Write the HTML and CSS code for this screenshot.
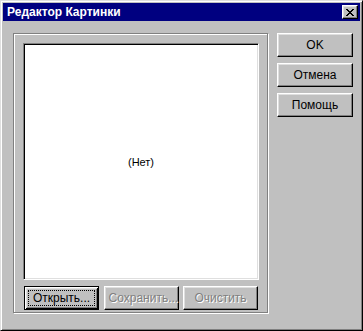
FILE: index.html
```html
<!DOCTYPE html>
<html lang="ru">
<head>
    <meta charset="UTF-8">
    <title>Редактор Картинки</title>
    <link rel="stylesheet" href="styles.css">
</head>
<body>
    <div class="window">
        <div class="titlebar">
            <span class="title">Редактор Картинки</span>
            <button class="close-button" title="Закрыть">
                <svg width="8" height="7" viewBox="0 0 8 7" shape-rendering="crispEdges">
                    <path fill="#000" d="M0 0h2v1h-2zM6 0h2v1h-2zM1 1h2v1h-2zM5 1h2v1h-2zM2 2h4v1h-4zM3 3h2v1h-2zM2 4h4v1h-4zM1 5h2v1h-2zM5 5h2v1h-2zM0 6h2v1h-2zM6 6h2v1h-2z"/>
                </svg>
            </button>
        </div>

        <div class="client">
            <div class="group">
                <div class="picture">
                    <span>(Нет)</span>
                </div>
                <div class="group-buttons">
                    <button class="btn btn-default"><span class="focus">Открыть...</span></button>
                    <button class="btn" disabled><span>Сохранить...</span></button>
                    <button class="btn" disabled><span>Очистить</span></button>
                </div>
            </div>

            <div class="side-buttons">
                <button class="btn"><span>OK</span></button>
                <button class="btn"><span>Отмена</span></button>
                <button class="btn"><span>Помощь</span></button>
            </div>
        </div>
    </div>
</body>
</html>
```

FILE: styles.css
```css
body {
    margin: 0;
    background-color: #c0c0c0;
    font-family: 'Liberation Sans', Arial, sans-serif;
    font-size: 11px;
    color: #000;
}
.window {
    width: 363px;
    height: 331px;
    box-sizing: border-box;
    background-color: #c0c0c0;
    border: 1px solid;
    border-color: #dfdfdf #000 #000 #dfdfdf;
    box-shadow: inset 1px 1px 0 #fff, inset -1px -1px 0 #808080; /* raised frame */
    padding: 2px;
    display: flex;
    flex-direction: column;
}
.titlebar {
    height: 18px;
    background-color: #000080; /* navy caption */
    color: #fff;
    display: flex;
    align-items: center;
    justify-content: space-between;
    padding: 0 2px 0 4px;
}
.title {
    font-weight: bold;
    font-size: 12px;
}
.close-button {
    width: 16px;
    height: 14px;
    padding: 0;
    background-color: #c0c0c0;
    border: 1px solid;
    border-color: #fff #000 #000 #fff;
    box-shadow: inset -1px -1px 0 #808080, inset 1px 1px 0 #dfdfdf;
    display: flex;
    align-items: center;
    justify-content: center;
}
.client {
    flex-grow: 1;
    display: flex;
    align-items: flex-start;
    padding: 12px 0 0 10px;
    gap: 9px;
}
.group {
    width: 255px;
    box-sizing: border-box;
    border: 1px solid #808080;
    box-shadow: 1px 1px 0 #fff, inset 1px 1px 0 #fff; /* etched edge */
    padding: 9px 0 2px 9px;
    display: flex;
    flex-direction: column;
}
.picture {
    width: 236px;
    height: 237px;
    box-sizing: border-box;
    background-color: #fff;
    border: 1px solid;
    border-color: #808080 #fff #fff #808080;
    box-shadow: inset 1px 1px 0 #000, inset -1px -1px 0 #dfdfdf; /* sunken */
    display: flex;
    align-items: center;
    justify-content: center;
}
.group-buttons {
    width: 234px;
    margin: 6px 0 0 1px;
    display: flex;
    justify-content: space-between;
}
.side-buttons {
    display: flex;
    flex-direction: column;
    gap: 6px;
}
.btn {
    width: 75px;
    height: 24px;
    padding: 3px;
    box-sizing: border-box;
    font-family: 'Liberation Sans', Arial, sans-serif;
    font-size: 12px;
    color: #000;
    background-color: #c0c0c0;
    border: 1px solid;
    border-color: #fff #000 #000 #fff;
    box-shadow: inset -1px -1px 0 #808080, inset 1px 1px 0 #dfdfdf;
    display: flex;
}
.side-buttons .btn {
    width: 76px;
}
.btn-default {
    border-color: #000;
    box-shadow: inset 1px 1px 0 #fff, inset -1px -1px 0 #000, inset 2px 2px 0 #dfdfdf, inset -2px -2px 0 #808080;
}
.btn span {
    flex-grow: 1;
    display: flex;
    align-items: center;
    justify-content: center;
    border: 1px dotted transparent;
}
.btn .focus {
    border-color: #000;
}
.btn:disabled {
    color: #808080;
    text-shadow: 1px 1px 0 #fff;
}
```
